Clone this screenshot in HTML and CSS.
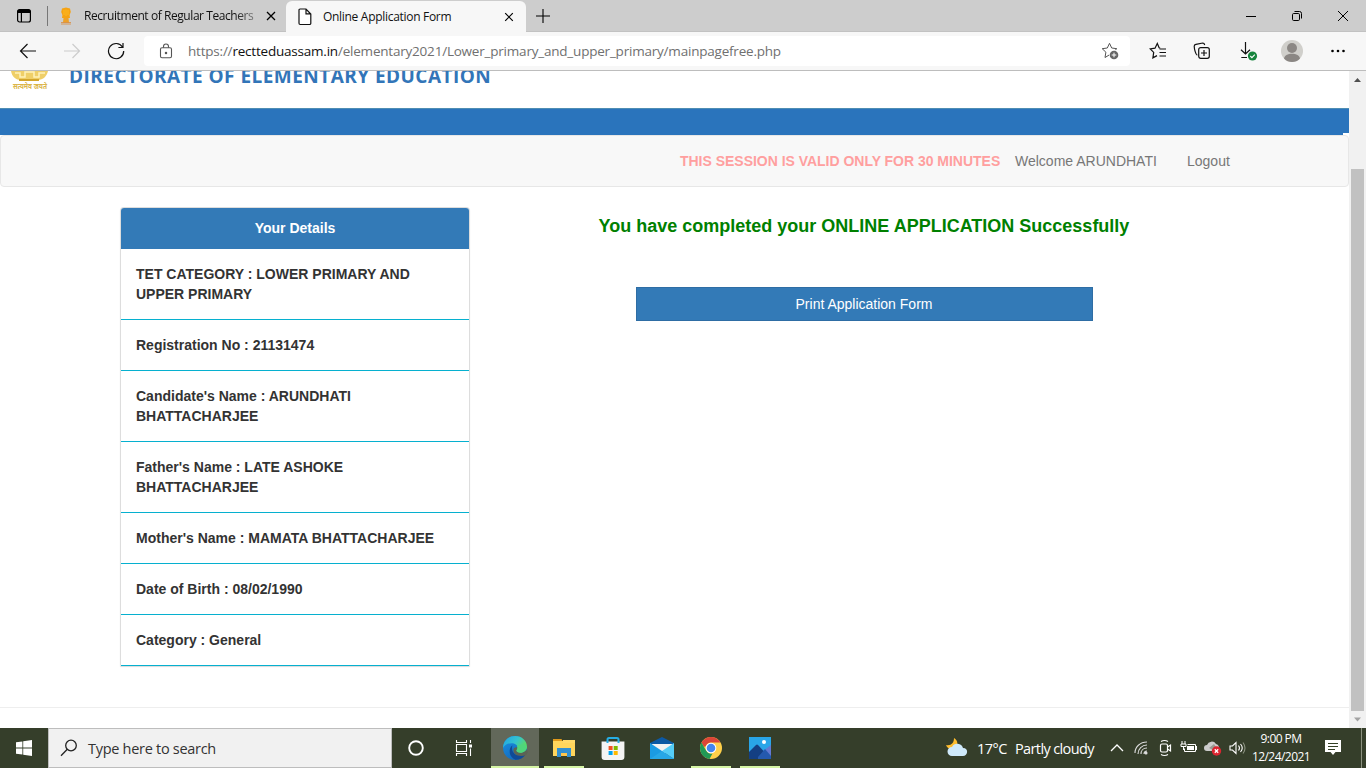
FILE: index.html
```html
<!DOCTYPE html>
<html lang="en">
<head>
<meta charset="utf-8">
<title>Online Application Form</title>
<link rel="stylesheet" href="styles.css">
</head>
<body>
<div class="screen">
  <div class="tabbar">
    <svg class="tab-actions" width="16" height="16" viewBox="0 0 16 16"><rect x="1.6" y="1.6" width="12.8" height="12.4" rx="2" fill="none" stroke="#000" stroke-width="1.2"/><path d="M1.5 5V3.5a2 2 0 0 1 2-2h9a2 2 0 0 1 2 2V5z"/><path d="M5.4 5v9" stroke="#000" stroke-width="1.2"/></svg>
    <i class="divider"></i>
    <div class="tab tab-idle">
      <svg class="fav" width="14" height="18" viewBox="0 0 14 18"><path d="M3 1.5 7 .5l4 1 .8 3.5-1.2 3 .4 3H3l.4-3L2.200 5z" fill="#f6a313"/><path d="M4.500 11h5l.5 4.400H4z" fill="#eda128"/><path d="M2 15.500h10M2 17h10" stroke="#d98a3a" stroke-width=".8"/><path d="M5 3v5M7 2.500V9M9 3v5" stroke="#ffc32d" stroke-width=".7"/></svg>
      <span class="tab-title idle-title">Recruitment of Regular Teachers</span>
      <svg class="close" width="10" height="10" viewBox="0 0 10 10"><path d="m1 1 8 8m0-8L1 9" stroke="#000" stroke-width="1.300"/></svg>
    </div>
    <div class="tab tab-active">
      <svg class="page-ico" width="14" height="18" viewBox="0 0 14 18"><path d="M1 2.500A1.200 1.200 0 0 1 2.200 1H8l4.800 5v9.300A1.200 1.200 0 0 1 11.600 16.500H2.200A1.200 1.200 0 0 1 1 15.300zM8 1v4.800h4.800" fill="#fff" stroke="#111" stroke-width="1.200"/></svg>
      <span class="tab-title active-title">Online Application Form</span>
      <svg class="close" width="10" height="10" viewBox="0 0 10 10"><path d="m1.200 1.200 7.600 7.600m0-7.600L1.200 8.800" stroke="#000" stroke-width="1.200"/></svg>
    </div>
    <svg class="plus" width="14" height="14" viewBox="0 0 14 14"><path d="M7 0v14M0 7h14" stroke="#000" stroke-width="1.100"/></svg>
    <div class="winctl">
      <svg width="12" height="12" viewBox="0 0 12 12"><path d="M1 6.500h10" stroke="#000"/></svg>
      <svg width="12" height="12" viewBox="0 0 12 12" fill="none" stroke="#000"><rect x="1.500" y="3.500" width="7" height="7" rx="1.200"/><path d="M3.500 1.500h5a2 2 0 0 1 2 2v5"/></svg>
      <svg width="12" height="12" viewBox="0 0 12 12"><path d="m1 1 10 10m0-10L1 11" stroke="#000"/></svg>
    </div>
  </div>

  <div class="toolbar">
    <div class="navbtns">
      <svg width="18" height="16" viewBox="0 0 18 16" fill="none" stroke="#111" stroke-width="1.200"><path d="M17 8H1.500m7-7-7 7 7 7"/></svg>
      <svg width="18" height="16" viewBox="0 0 18 16" fill="none" stroke="#ccc" stroke-width="1.200"><path d="M1 8h15.500m-7-7 7 7-7 7"/></svg>
      <svg width="18" height="18" viewBox="0 0 18 18" fill="none" stroke="#111" stroke-width="1.200"><path d="M15.500 5A7.600 7.600 0 1 0 16.700 9M16 1v4.500h-4.600"/></svg>
    </div>
    <div class="address">
      <svg width="14" height="16" viewBox="0 0 14 16" fill="none" stroke="#555" stroke-width="1.100"><rect x="1.500" y="4.800" width="11" height="10" rx="1.500"/><path d="M4.500 4.800V3.500a2.500 2.500 0 0 1 5 0v1.300"/><circle cx="7" cy="10" r=".7" fill="#333"/></svg>
      <span class="url">https://<span class="host">rectteduassam.in</span>/elementary2021/Lower_primary_and_upper_primary/mainpagefree.php</span>
      <svg class="star" width="18" height="18" viewBox="0 0 18 18"><path d="m8.500 1.300 2.200 4.700 5.100.7-3.700 3.500.9 5-4.500-2.400L4 15.500l.9-5.300L1.200 6.700 6.300 6z" fill="none" stroke="#555"/><circle cx="13" cy="13" r="5" fill="#fff"/><circle cx="13" cy="13" r="4.300" fill="#666"/><path d="M13 10.700v4.600M10.700 13h4.600" stroke="#fff"/></svg>
    </div>
    <div class="tools">
      <svg width="18" height="18" viewBox="0 0 18 18" fill="none" stroke="#111" stroke-width="1.200"><path d="m11.200 6-1.100-.2L8.300 1.500 6 6.200l-4.800.7 3.500 3.500-.8 5.400L8 13.600M10.500 7H17M10.500 10.500H17M10.500 14H17"/></svg>
      <svg width="18" height="18" viewBox="0 0 18 18" fill="none" stroke="#111" stroke-width="1.200"><path d="M4.300 13.200C2.500 12.500 1.300 6.500 1.200 4.200c0-1 .8-1.600 1.700-1.800L9.800 1c1 0 1.600.7 1.900 2"/><rect x="5.700" y="5.700" width="10.600" height="10.600" rx="2"/><path d="M11 8v6M8 11h6"/></svg>
      <svg width="18" height="20" viewBox="0 0 18 20"><path d="M5.500 1v12M1 8.700 5.500 13 10 8.700M1.300 16.500H7" fill="none" stroke="#111" stroke-width="1.200"/><circle cx="12.500" cy="15" r="4.600" fill="#16843c"/><path d="m10.300 15 1.600 1.600 2.900-3" fill="none" stroke="#fff" stroke-width="1.100"/></svg>
      <svg width="22" height="22" viewBox="0 0 22 22"><defs><clipPath id="avatar"><circle cx="11" cy="11" r="11"/></clipPath></defs><g clip-path="url(#avatar)"><path d="M0 0h22v22H0z" fill="#d0cfcb"/><circle cx="11" cy="8" r="5" fill="#8b8784"/><path d="M3 22v-3c0-7 16-7 16 0v3z" fill="#8b8784"/></g></svg>
      <svg width="16" height="4" viewBox="0 0 16 4"><circle cx="2.500" cy="2" r="1.300"/><circle cx="8" cy="2" r="1.300"/><circle cx="13.500" cy="2" r="1.300"/></svg>
    </div>
  </div>

  <div class="viewport">
    <main class="page">
      <header class="brand">
        <svg class="emblem" width="44" height="22" viewBox="0 0 44 22"><path d="M2 0h37c-1 5-5 9-10 9H12C7 9 3 6 2 0z" fill="#efcf68"/><path d="M6 2h5v4h5V1h9v5h5V2h6" fill="none" stroke="#fff2b9" stroke-width="1.500"/><path d="M10 9h20" stroke="#d3a52b" stroke-width="2"/><text x="4" y="18" font-size="7.500" textLength="34" lengthAdjust="spacingAndGlyphs" class="motto">सत्यमेव जयते</text></svg>
        <h1>DIRECTORATE OF ELEMENTARY EDUCATION</h1>
      </header>
      <div class="band"></div>
      <nav class="sitebar">
        <strong>THIS SESSION IS VALID ONLY FOR 30 MINUTES</strong>
        <span class="welcome">Welcome ARUNDHATI</span>
        <span>Logout</span>
      </nav>
      <div class="content">
        <section class="panel">
          <h2>Your Details</h2>
          <ul>
            <li>TET CATEGORY : LOWER PRIMARY AND<br>UPPER PRIMARY</li>
            <li>Registration No : 21131474</li>
            <li>Candidate's Name : ARUNDHATI<br>BHATTACHARJEE</li>
            <li>Father's Name : LATE ASHOKE<br>BHATTACHARJEE</li>
            <li>Mother's Name : MAMATA BHATTACHARJEE</li>
            <li>Date of Birth : 08/02/1990</li>
            <li>Category : General</li>
          </ul>
        </section>
        <section class="result">
          <h3>You have completed your ONLINE APPLICATION Successfully</h3>
          <div class="print">Print Application Form</div>
        </section>
      </div>
      <div class="rule"></div>
    </main>
    <div class="scroll">
      <svg width="17" height="17" viewBox="0 0 17 17"><path d="m5 11 3.500-4 3.500 4z" fill="#505050"/></svg>
      <i class="thumb"></i>
      <svg width="17" height="17" viewBox="0 0 17 17"><path d="m5 6.500 3.500 4 3.500-4z" fill="#a3a3a3"/></svg>
    </div>
  </div>

  <footer class="taskbar">
    <div class="slot"><svg width="16" height="16" viewBox="0 0 16 16" fill="#fff"><path d="M0 2.300 6.400 1.400v6.200H0zM7.200 1.300 16 0v7.600H7.200zM0 8.400h6.400v6.200L0 13.700zM7.200 8.400H16V16l-8.800-1.300z"/></svg></div>
    <div class="search"><svg width="18" height="18" viewBox="0 0 18 18" fill="none" stroke="#222" stroke-width="1.300"><circle cx="11" cy="6.500" r="5.300"/><path d="M7.300 10.300 1 16.700"/></svg><span>Type here to search</span></div>
    <div class="slot"><svg width="18" height="18" viewBox="0 0 18 18"><circle cx="9" cy="9" r="6.800" fill="none" stroke="#fff" stroke-width="1.900"/></svg></div>
    <div class="slot view"><svg width="18" height="16" viewBox="0 0 18 16" fill="none" stroke="#fff" stroke-width="1.100"><path d="M1.500 0v2.500h10V0M1.500 16v-2.500h10V16M1.500 4.500h10v7h-10zM15.500 0v3M15.500 8.500V16"/><path d="M14 4.500h3v3h-3z" fill="#fff" stroke="none"/></svg></div>
    <div class="apps">
      <div class="slot app focus"><svg width="26" height="26" viewBox="0 0 24 24"><defs><linearGradient id="wave" x1="0" y1="0" x2="1" y2=".5"><stop offset="0" stop-color="#1fa2e6"/><stop offset=".55" stop-color="#35c3cf"/><stop offset="1" stop-color="#5fdd5a"/></linearGradient><linearGradient id="deep" x1="0" y1="0" x2=".6" y2="1"><stop offset="0" stop-color="#1b94e4"/><stop offset="1" stop-color="#1267bb"/></linearGradient></defs><circle cx="12" cy="12" r="11" fill="url(#deep)"/><path d="M1 12C1 5.500 6 1 12 1c6.500 0 11 4.600 11 9.500 0 3.500-2.700 5.800-6 5.800-2.400 0-3.700-1-3.700-2 0-.7 1-1.200 1-2.800 0-2.400-2.300-4-5.500-4C5 7.500 1.700 9.600 1 12z" fill="url(#wave)"/><path d="M9.500 9.500c-3.700 3-3.500 11 3 13.400 4 0 7.300-1.900 9.200-5-5.500 2.600-14 .6-12.200-8.400z" fill="#104a96"/><path d="M14.300 11.500c0 1.600-1 2.100-1 2.800 0 1 1.300 2 3.700 2 2.300 0 4.300-1 5.300-2.700l1.700 2-1.700 2.800c-5 2-11.800.7-11.800-4.600 0-1.500 1.500-2.800 3.800-2.300z" fill="#5c6354"/><path d="M14.300 11.500c0 1.600-1 2.100-1 2.800 0 1 1.300 2 3.700 2 3.300 0 6-2.300 6-5.800L20 8l-6 2z" fill="#4fd67b"/></svg></div>
      <div class="slot app open"><svg width="24" height="20" viewBox="0 0 24 20"><path d="M1 1h8.500l1 2H1z" fill="#e19a1b"/><path d="M1 3h22v15H1z" fill="#ffd55c"/><path d="M11 2h12v3H11z" fill="#ffd969"/><path d="M5 10h14v9h-4v-4H9v4H5z" fill="#328fd0"/><path d="M9 15h6v3H9z" fill="#ffc54a"/></svg></div>
      <div class="slot app"><svg width="24" height="24" viewBox="0 0 24 24"><path d="M.600 5.500h22.800V21a3 3 0 0 1-3 3H3.600a3 3 0 0 1-3-3z" fill="#f4f4f4"/><path d="M6.500 7V3.500A1.500 1.500 0 0 1 8 2h8a1.500 1.500 0 0 1 1.500 1.500V7" fill="none" stroke="#26aee5" stroke-width="2"/><path d="M7.600 10h4v4h-4z" fill="#f25022"/><path d="M12.700 10h4v4h-4z" fill="#7fba00"/><path d="M7.600 15h4v4h-4z" fill="#00a4ef"/><path d="M12.700 15h4v4h-4z" fill="#ffb900"/></svg></div>
      <div class="slot app"><svg width="24" height="24" viewBox="0 0 24 24"><path d="M0 7 12 1l12 6v6H0z" fill="#0c59a4"/><path d="M2 8h20v9H2z" fill="#f3f3f3"/><path d="M0 7v16h24z" fill="#1b9be3"/><path d="M24 7v16L12 15z" fill="#55cdf7"/><path d="m12 15 12 8H0z" fill="#27a7e7"/></svg></div>
      <div class="slot app open"><svg width="24" height="24" viewBox="0 0 24 24"><circle cx="12" cy="12" r="11" fill="#ffd04a"/><path d="M2.500 6.500a11 11 0 0 1 19 0H12a5.500 5.500 0 0 0-5.100 3.500L5 11z" fill="#dc4538"/><path d="M2.500 6.500 7.200 14.700A5.500 5.500 0 0 0 13.500 17.400L10.500 23A11 11 0 0 1 2.500 6.500z" fill="#219956"/><circle cx="12" cy="12" r="5.300" fill="#fff"/><circle cx="12" cy="12" r="4.300" fill="#4586ee"/></svg></div>
      <div class="slot app open"><svg width="22" height="22" viewBox="0 0 22 22"><path d="M0 0h22v22H0z" fill="#29a5e8"/><path d="M14 14 22 8v14h-8z" fill="#6479d2"/><path d="m0 15 7-7q1-.8 2 0l13 14H0z" fill="#143f83"/><path d="M9 20 16 12l6 7v3H9z" fill="#2459ae"/><circle cx="15" cy="5" r="2" fill="#fff"/></svg></div>
    </div>
    <div class="weather"><svg width="24" height="22" viewBox="0 0 24 22"><path d="M9 1c4 2 5 8 0 11-4 1-7-1-8-4 5 1 8-2 8-7z" fill="#ffbd2e"/><path d="M7 19a4.500 4.500 0 0 1 0-9 6 6 0 0 1 11 1c6 0 5 8 0 8z" fill="#cfe9fa"/></svg><span class="temp">17°C</span><span class="sky">Partly cloudy</span></div>
    <div class="tray">
      <svg width="24" height="18" viewBox="0 0 24 18"><path d="m6 12 6-6 6 6" fill="none" stroke="#fff" stroke-width="1.300"/></svg>
      <svg width="24" height="18" viewBox="0 0 24 18" fill="none" stroke="#ddd" stroke-width="1.100"><path d="M6 14C6 8 11 3 18 3M9 15c0-5 4-9 9-9M12 15c0-3 2-6 6-6M15 15c0-2 1-3 3-3"/><circle cx="17" cy="14" r="1" fill="#fff"/></svg>
      <svg width="24" height="18" viewBox="0 0 24 18" fill="none" stroke="#fff" stroke-width="1.200"><rect x="7.500" y="5" width="7" height="8" rx="1.500"/><path d="m14.500 8 3-2v6l-3-2M8 2.500Q11.500.500 15 2.500M8 15.500q3.500 2 7 0"/></svg>
      <svg width="24" height="18" viewBox="0 0 24 18" fill="none" stroke="#fff"><path d="M10.500 5.500h8v7h-11v-3M19.500 7v4M5 2v3M8 2v3M4 5h5v2.500H4zM6.500 7.500V11"/><path d="M10 7h7v4h-7z" fill="#fff" stroke="none"/></svg>
      <svg width="24" height="18" viewBox="0 0 24 18"><path d="M6 12a3 3 0 0 1 0-6 5 5 0 0 1 9-1q4 1 3 7z" fill="#ccc"/><path d="m8 9 5-4 4 6-3 1z" fill="#969a92"/><circle cx="15.500" cy="12" r="4.700" fill="#db2530"/><path d="m13.800 10.300 3.400 3.400m0-3.400-3.400 3.400" stroke="#fff" stroke-width="1.300"/></svg>
      <svg width="24" height="18" viewBox="0 0 24 18" fill="none" stroke="#fff" stroke-width="1.100"><path d="M5 7h2.500L11 3.500v11L7.500 11H5zM13.500 6.500q2 2.500 0 5M15.500 5q3.500 4 0 8"/><path d="M18 3.500q4 5.500 0 11" stroke="#8b9280"/></svg>
    </div>
    <div class="clock"><span>9:00 PM</span><span class="date">12/24/2021</span></div>
    <svg class="note" width="18" height="18" viewBox="0 0 18 18"><path d="M1 1h16v12h-5.500L9 16l-2.500-3H1z" fill="#fff"/><path d="M4 4.500h10M4 7.500h10M4 10.500h7" stroke="#344026"/></svg>
    <i class="peek"></i>
  </footer>
</div>
</body>
</html>
```
FILE: styles.css
```css
* { box-sizing: border-box; }
body { margin: 0; background: #fff; font-family: "Liberation Sans", Arial, sans-serif; overflow: hidden; }
svg { display: block; flex: none; }
.screen { width: 1366px; height: 768px; display: flex; flex-direction: column; overflow: hidden; }

.tabbar { height: 32px; flex: none; display: flex; background: #cdcdcd; align-items: center; border-bottom: 1px solid #c2c2c2; font-family: "Open Sans", sans-serif; }
.tab-actions { margin-left: 16px; }
.divider { width: 1px; height: 20px; background: #777; margin-left: 15px; }
.tab { height: 32px; display: flex; align-items: center; flex: none; }
.tab-idle { width: 238px; padding-left: 11px; }
.fav { margin-right: 11px; }
.tab-title { font-size: 12px; line-height: 16px; white-space: nowrap; color: #111; }
.idle-title { width: 171px; overflow: hidden; letter-spacing: -.43px; -webkit-mask-image: linear-gradient(90deg, #000 88%, rgba(0,0,0,.4)); }
.idle-title + .close { margin-left: 11px; }
.tab-active { width: 240px; padding-left: 12px; background: #f7f7f7; border-radius: 6px 6px 0 0; position: relative; top: 1px; }
.page-ico { margin-right: 11px; }
.active-title { width: 181px; letter-spacing: -.3px; }
.plus { margin-left: 10px; }
.winctl { margin-left: auto; display: flex; gap: 34px; padding-right: 17px; }

.toolbar { height: 39px; flex: none; display: flex; align-items: center; background: #f7f7f7; border-bottom: 1px solid #bdbdbd; }
.navbtns { width: 144px; padding-left: 19px; display: flex; gap: 26px; align-items: center; }
.address { width: 986px; height: 30px; display: flex; align-items: center; padding-left: 15px; background: #fff; border-radius: 4px; }
.url { margin-left: 15px; width: 913px; white-space: nowrap; font: 13.5px/20px "Open Sans", sans-serif; letter-spacing: -.21px; color: #707070; }
.host { color: #111; }
.tools { flex: 1; display: flex; align-items: center; padding-left: 19px; }
.tools svg:nth-child(2) { margin-left: 26px; }
.tools svg:nth-child(3) { margin-left: 29px; }
.tools svg:nth-child(4) { margin-left: 23px; }
.tools svg:nth-child(5) { margin-left: 27px; }

.viewport { height: 657px; flex: none; display: flex; overflow: hidden; }
.page { width: 1349px; background: #fff; }
.brand { height: 37px; display: flex; overflow: hidden; padding-left: 9px; }
.motto { font-family: "Noto Sans", sans-serif; fill: #dbb64a; font-weight: 700; }
.brand h1 { margin: -9px 0 0 16px; font: 700 19px/28px "Open Sans", sans-serif; letter-spacing: .46px; color: #3275b8; white-space: nowrap; }
.band { height: 27px; background: linear-gradient(#fff, #fff) right bottom / 6px 2px no-repeat, linear-gradient(#4f8eb3 1px, #2a74bc 1px); }
.sitebar { height: 52px; display: flex; align-items: center; padding-left: 679px; background: #f8f8f8; border: 1px solid #e7e7e7; border-radius: 4px; font-size: 14px; color: #777; }
.sitebar strong { width: 335px; color: #ff9f9f; letter-spacing: -.02px; white-space: nowrap; }
.welcome { width: 172px; }
.content { display: flex; padding: 20px 0 0 120px; height: 520px; }
.panel { width: 350px; height: 459px; border: 1px solid #ddd; border-bottom: 0; border-radius: 4px 4px 1px 1px; box-shadow: 0 1px 1px rgba(0,0,0,.15); overflow: hidden; }
.panel h2 { margin: 0; height: 41px; background: #337ab7; color: #fff; font-size: 14px; line-height: 40px; text-align: center; }
.panel ul { list-style: none; margin: 0; padding: 0; }
.panel li { padding: 15px; font-size: 14px; line-height: 20px; font-weight: 700; color: #333; border-bottom: 1px solid #06b0cf; white-space: nowrap; }
.result { width: 530px; margin-left: 129px; display: flex; flex-direction: column; align-items: center; }
.result h3 { margin: 8px 0 0; font-size: 18px; line-height: 22px; color: green; white-space: nowrap; }
.print { margin-top: 50px; width: 457px; height: 34px; background: #337ab7; border: 1px solid #2e6da4; color: #fff; text-align: center; font-size: 14px; line-height: 32px; }
.rule { height: 1px; background: #eee; }
.scroll { width: 17px; background: #f1f1f1; display: flex; flex-direction: column; align-items: center; }
.thumb { width: 13px; height: 542px; margin-top: 81px; background: #c1c1c1; }

.taskbar { height: 40px; flex: none; display: flex; background: #353e2a; color: #fff; font-family: "Open Sans", sans-serif; }
.slot { width: 48px; height: 40px; display: flex; align-items: center; justify-content: center; flex: none; }
.search { width: 344px; background: #f1f1f1; border: 1px solid #bdbdbd; display: flex; align-items: center; padding-left: 11px; color: #333; font-size: 14.500px; letter-spacing: -.29px; }
.search span { margin-left: 10px; white-space: nowrap; }
.apps { display: flex; gap: 1px; margin-left: 3px; }
.focus { background: linear-gradient(#d5f5a5, #d5f5a5) center bottom / 48px 2px no-repeat #62685a; }
.open { background: linear-gradient(#d5f5a5, #d5f5a5) center bottom / 40px 2px no-repeat; }
.weather { display: flex; align-items: center; width: 160px; margin-left: 161px; font-size: 14.500px; letter-spacing: -.62px; white-space: nowrap; }
.temp { width: 38px; margin-left: 8px; letter-spacing: -.5px; }
.tray { display: flex; align-items: center; width: 144px; }
.clock { width: 64px; display: flex; flex-direction: column; align-items: center; padding-top: 2px; font-size: 12px; line-height: 18px; letter-spacing: -.55px; }
.note { margin: 11px 0 0 11px; }
.peek { width: 1px; height: 40px; margin-left: 19px; background: #8b917f; }
```
